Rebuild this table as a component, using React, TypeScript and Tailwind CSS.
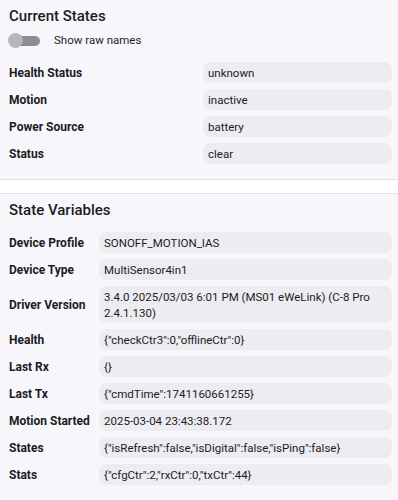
import React, { useState } from "react";

type Row = { label: string; value: string };

const currentStates: Row[] = [
  { label: "Health Status", value: "unknown" },
  { label: "Motion", value: "inactive" },
  { label: "Power Source", value: "battery" },
  { label: "Status", value: "clear" },
];

const stateVariables: Row[] = [
  { label: "Device Profile", value: "SONOFF_MOTION_IAS" },
  { label: "Device Type", value: "MultiSensor4in1" },
  {
    label: "Driver Version",
    value: "3.4.0 2025/03/03 6:01 PM (MS01 eWeLink) (C-8 Pro 2.4.1.130)",
  },
  { label: "Health", value: '{"checkCtr3":0,"offlineCtr":0}' },
  { label: "Last Rx", value: "{}" },
  { label: "Last Tx", value: '{"cmdTime":1741160661255}' },
  { label: "Motion Started", value: "2025-03-04 23:43:38.172" },
  {
    label: "States",
    value: '{"isRefresh":false,"isDigital":false,"isPing":false}',
  },
  { label: "Stats", value: '{"cfgCtr":2,"rxCtr":0,"txCtr":44}' },
];

function Pill({ children }: { children: React.ReactNode }) {
  return (
    <div className="bg-[#ececf1] rounded-[8px] px-[5px] py-[2.5px] text-[11.5px] leading-[16px] text-[#1c1b1f] break-words">
      {children}
    </div>
  );
}

function Label({ children }: { children: React.ReactNode }) {
  return (
    <div className="text-[12px] leading-[16px] font-bold text-[#1c1b1f]">
      {children}
    </div>
  );
}

export default function App() {
  const [raw, setRaw] = useState(false);

  return (
    <div
      className="w-[398px] bg-white"
      style={{ fontFamily: "Roboto, 'Liberation Sans', sans-serif" }}
    >
      {/* Current States */}
      <div className="bg-[#f7f7fb] border-b border-[#e2e2e8] pl-[9px] pr-[6px] pt-[6px] pb-[15px]">
        <h2 className="text-[15px] leading-[20px] font-medium text-[#1c1b1f]">
          Current States
        </h2>

        <div className="mt-[6px] h-[18px] flex items-center">
          <button
            onClick={() => setRaw(!raw)}
            className="relative w-[31px] h-[18px] shrink-0 cursor-pointer"
          >
            <span className="absolute left-[5px] top-[4px] w-[26px] h-[10px] rounded-full bg-[#8d8d8f]" />
            <span className="absolute left-[-1px] top-[1px] w-[15px] h-[15px] rounded-full bg-[#b6b6b8]" />
          </button>
          <span className="ml-[14px] text-[11.5px] text-[#1c1b1f]">
            Show raw names
          </span>
        </div>

        <div className="mt-[12px] grid grid-cols-2 gap-x-[5px] gap-y-[6px] items-center">
          {currentStates.map((r) => (
            <React.Fragment key={r.label}>
              <Label>{r.label}</Label>
              <Pill>{r.value}</Pill>
            </React.Fragment>
          ))}
        </div>
      </div>

      {/* State Variables */}
      <div className="mt-[13px] bg-[#f7f7fb] border-t border-b border-[#e2e2e8] pl-[9px] pr-[6px] pt-[6px] pb-[15px]">
        <h2 className="text-[15px] leading-[20px] font-medium text-[#1c1b1f]">
          State Variables
        </h2>

        <div className="mt-[12px] grid grid-cols-[86px_1fr] gap-x-[4px] gap-y-[6px] items-center">
          {stateVariables.map((r) => (
            <React.Fragment key={r.label}>
              <Label>{r.label}</Label>
              <Pill>{r.value}</Pill>
            </React.Fragment>
          ))}
        </div>
      </div>
    </div>
  );
}
